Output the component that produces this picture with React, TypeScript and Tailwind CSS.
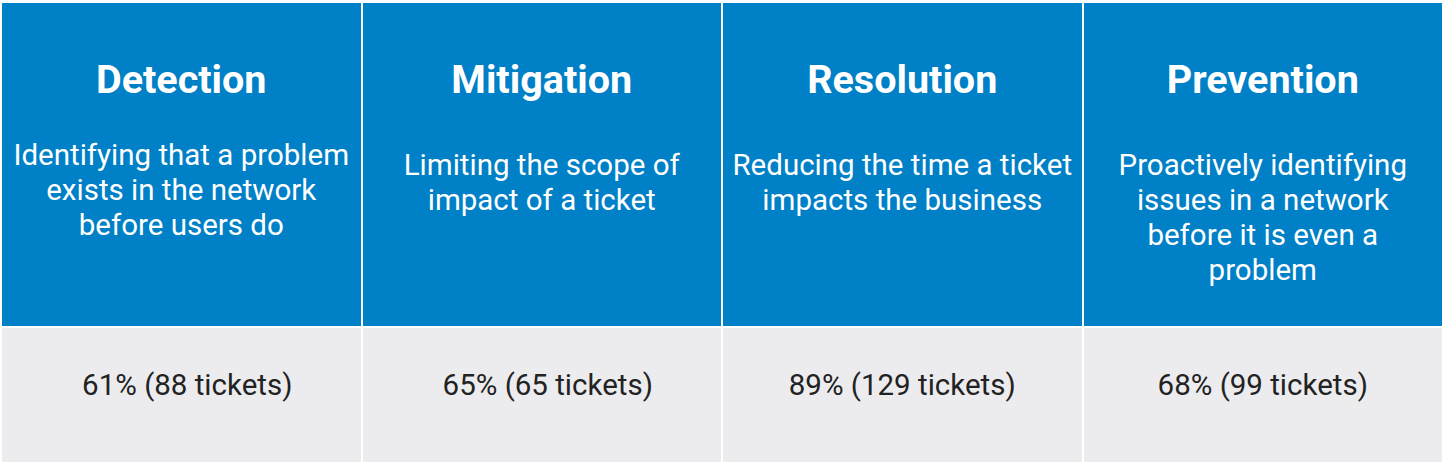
interface StageType {
  title: string;
  lines: string[];
  result: string;
  descTop: string;
  resultPad: string;
}

const stages: StageType[] = [
  {
    title: "Detection",
    lines: ["Identifying that a problem", "exists in the network", "before users do"],
    result: "61% (88 tickets)",
    descTop: "mt-[35px]",
    resultPad: "pl-3",
  },
  {
    title: "Mitigation",
    lines: ["Limiting the scope of", "impact of a ticket"],
    result: "65% (65 tickets)",
    descTop: "mt-[45px]",
    resultPad: "pl-3",
  },
  {
    title: "Resolution",
    lines: ["Reducing the time a ticket", "impacts the business"],
    result: "89% (129 tickets)",
    descTop: "mt-[45px]",
    resultPad: "pl-0",
  },
  {
    title: "Prevention",
    lines: ["Proactively identifying", "issues in a network", "before it is even a", "problem"],
    result: "68% (99 tickets)",
    descTop: "mt-[45px]",
    resultPad: "pl-0",
  },
];

export default function App(): JSX.Element {
  return (
    <div className="w-[1450px] h-[470px] bg-white pt-[3px] pl-[2px] font-['Roboto',sans-serif]">
      <div className="grid grid-cols-4 grid-rows-[323px_134px] gap-[2px] w-[1440px]">
        {stages.map((stage) => (
          <div
            key={stage.title}
            className="bg-[#0080c6] text-white text-center flex flex-col items-center pt-[54px] px-1"
          >
            <h2 className="text-[39.5px] leading-[46px] font-bold">{stage.title}</h2>
            <p className={`${stage.descTop} text-[29.5px] leading-[35px] whitespace-nowrap`}>
              {stage.lines.map((line) => (
                <span key={line} className="block">
                  {line}
                </span>
              ))}
            </p>
          </div>
        ))}
        {stages.map((stage) => (
          <div
            key={stage.title + "-result"}
            className={`${stage.resultPad} bg-[#ececef] text-[#222222] text-center pt-[40px] text-[29.5px] leading-[35px]`}
          >
            {stage.result}
          </div>
        ))}
      </div>
    </div>
  );
}
